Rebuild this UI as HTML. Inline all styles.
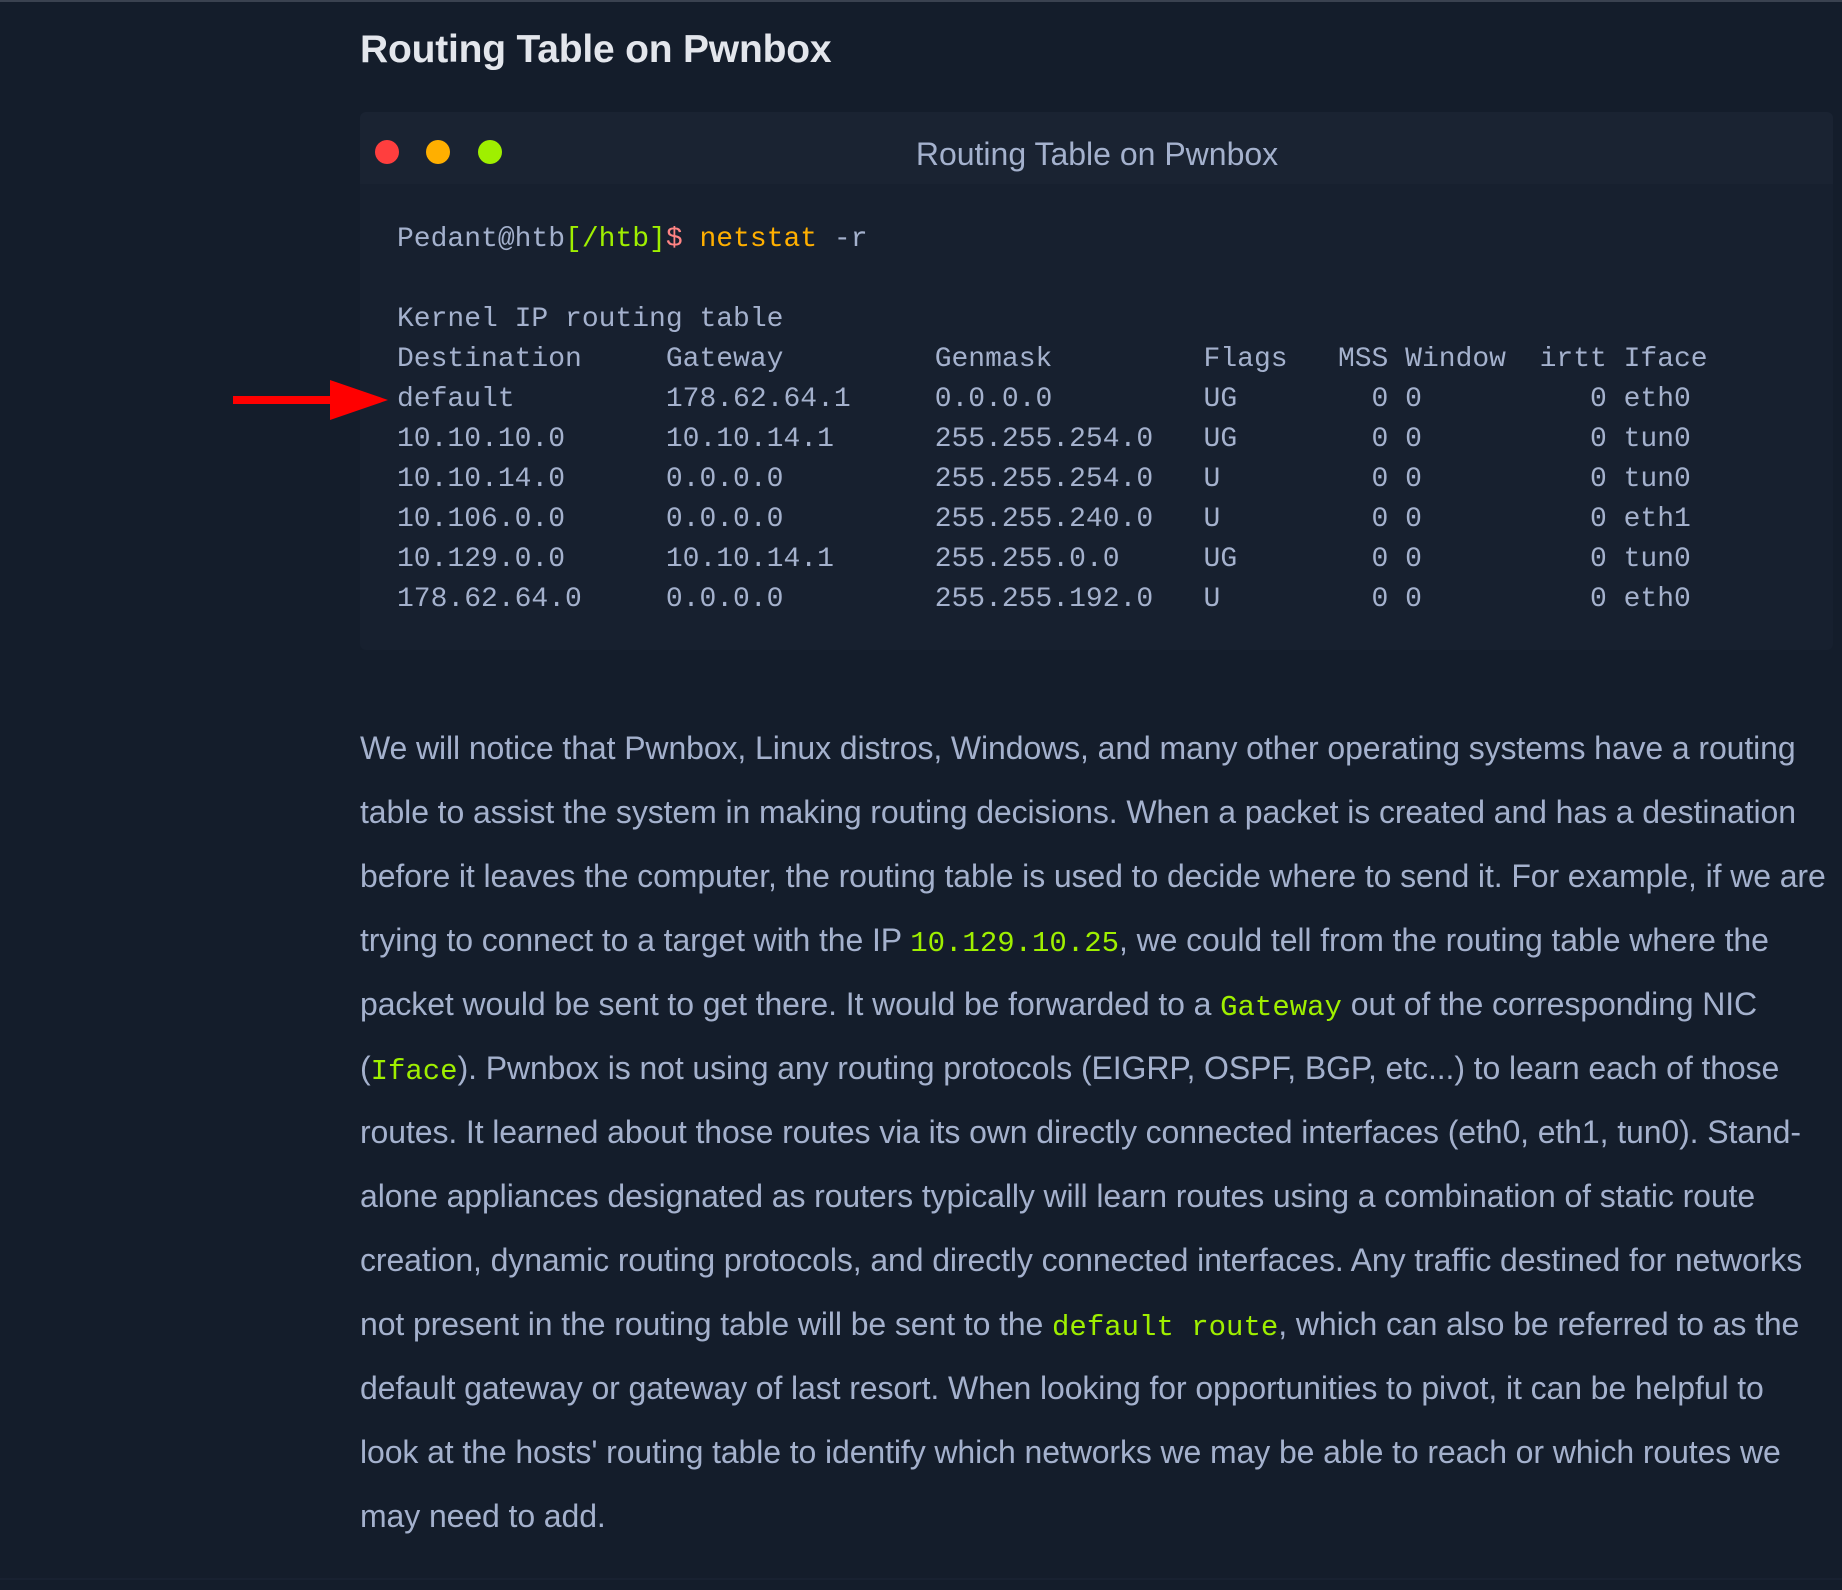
<!DOCTYPE html>
<html><head><meta charset="utf-8"><style>
html,body{margin:0;padding:0;background:#141d2b;width:1842px;height:1590px;overflow:hidden;position:relative}
.abs{position:absolute;white-space:pre}
h1{position:absolute;left:360px;top:28px;margin:0;font:bold 39px "Liberation Sans",sans-serif;color:#e3e6ec;letter-spacing:-0.2px}
.term{position:absolute;left:360px;top:112px;width:1473px;height:538px;background:#17202f;border-radius:6px}
.bar{position:absolute;left:0;top:0;right:0;height:72px;background:#1a2332;border-radius:6px 6px 0 0}
.dot{position:absolute;top:140px;width:24px;height:24px;border-radius:50%}
.tt{position:absolute;left:0;width:2194px;text-align:center;top:136px;font:32px "Liberation Sans",sans-serif;color:#a4b1cd}
.code{font:28px "Liberation Mono",monospace;color:#a4b1cd;left:397px}
.p{left:360px;font:32px "Liberation Sans",sans-serif;color:#a4b1cd;letter-spacing:-0.1px}
.g{color:#9fef00;font-family:"Liberation Mono",monospace;font-size:29px;letter-spacing:0;line-height:1}
</style></head><body>
<div style="position:absolute;left:0;top:0;width:1842px;height:2px;background:#3a4250"></div>
<div style="position:absolute;left:0;bottom:10px;width:1842px;height:2px;background:#182131"></div>
<h1>Routing Table on Pwnbox</h1>
<div class="term"><div class="bar"></div></div>
<div class="dot" style="left:375px;background:#ff3e3e"></div>
<div class="dot" style="left:426px;background:#ffaf00"></div>
<div class="dot" style="left:478px;background:#9fef00"></div>
<div class="tt">Routing Table on Pwnbox</div>
<div class="abs code" style="top:224px">Pedant@htb<span style="color:#9fef00">[/htb]</span><span style="color:#ff8484">$</span> <span style="color:#ffaf00">netstat</span> -r</div>
<div class="abs code" style="top:300px;line-height:40px">Kernel IP routing table
Destination     Gateway         Genmask         Flags   MSS Window  irtt Iface
default         178.62.64.1     0.0.0.0         UG        0 0          0 eth0
10.10.10.0      10.10.14.1      255.255.254.0   UG        0 0          0 tun0
10.10.14.0      0.0.0.0         255.255.254.0   U         0 0          0 tun0
10.106.0.0      0.0.0.0         255.255.240.0   U         0 0          0 eth1
10.129.0.0      10.10.14.1      255.255.0.0     UG        0 0          0 tun0
178.62.64.0     0.0.0.0         255.255.192.0   U         0 0          0 eth0</div>
<svg class="abs" style="left:230px;top:378px" width="162" height="44"><rect x="3" y="18" width="100" height="8" fill="#f00"/><polygon points="100,2 158,22 100,42" fill="#f00"/></svg>
<div class="abs p" style="top:716px;line-height:64px">We will notice that Pwnbox, Linux distros, Windows, and many other operating systems have a routing
table to assist the system in making routing decisions. When a packet is created and has a destination
before it leaves the computer, the routing table is used to decide where to send it. For example, if we are
trying to connect to a target with the IP <span class="g">10.129.10.25</span>, we could tell from the routing table where the
packet would be sent to get there. It would be forwarded to a <span class="g">Gateway</span> out of the corresponding NIC
(<span class="g">Iface</span>). Pwnbox is not using any routing protocols (EIGRP, OSPF, BGP, etc...) to learn each of those
routes. It learned about those routes via its own directly connected interfaces (eth0, eth1, tun0). Stand-
alone appliances designated as routers typically will learn routes using a combination of static route
creation, dynamic routing protocols, and directly connected interfaces. Any traffic destined for networks
not present in the routing table will be sent to the <span class="g">default route</span>, which can also be referred to as the
default gateway or gateway of last resort. When looking for opportunities to pivot, it can be helpful to
look at the hosts' routing table to identify which networks we may be able to reach or which routes we
may need to add.</div>
</body></html>
